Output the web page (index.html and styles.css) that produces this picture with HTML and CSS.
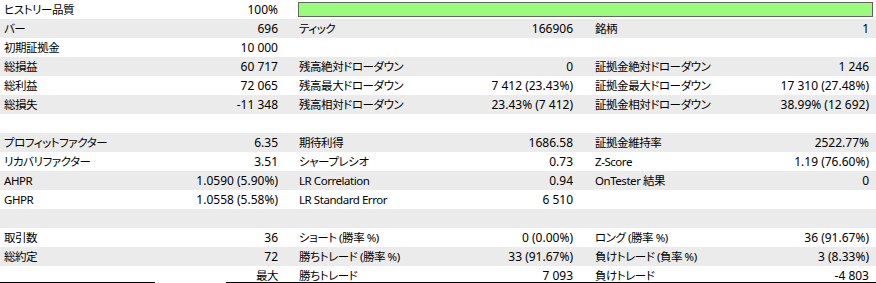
FILE: index.html
```html
<!DOCTYPE html>
<html lang="ja">
<head>
<meta charset="utf-8">
<link rel="stylesheet" href="styles.css">
</head>
<body>
<div class="report">
  <div class="row">
    <div class="cell"><span class="l">ヒストリー品質</span><span>100%</span></div>
    <div class="quality"><div class="bar"></div></div>
  </div>
  <div class="row alt">
    <div class="cell"><span class="l">バー</span><span>696</span></div>
    <div class="cell"><span class="l">ティック</span><span>166906</span></div>
    <div class="cell"><span class="l">銘柄</span><span>1</span></div>
  </div>
  <div class="row">
    <div class="cell"><span class="l">初期証拠金</span><span>10 000</span></div>
    <div class="cell"></div>
    <div class="cell"></div>
  </div>
  <div class="row alt">
    <div class="cell"><span class="l">総損益</span><span>60 717</span></div>
    <div class="cell"><span class="l">残高絶対ドローダウン</span><span>0</span></div>
    <div class="cell"><span class="l">証拠金絶対ドローダウン</span><span>1 246</span></div>
  </div>
  <div class="row">
    <div class="cell"><span class="l">総利益</span><span>72 065</span></div>
    <div class="cell"><span class="l">残高最大ドローダウン</span><span>7 412 (23.43%)</span></div>
    <div class="cell"><span class="l">証拠金最大ドローダウン</span><span>17 310 (27.48%)</span></div>
  </div>
  <div class="row alt">
    <div class="cell"><span class="l">総損失</span><span>-11 348</span></div>
    <div class="cell"><span class="l">残高相対ドローダウン</span><span>23.43% (7 412)</span></div>
    <div class="cell"><span class="l">証拠金相対ドローダウン</span><span>38.99% (12 692)</span></div>
  </div>
  <div class="row">
    <div class="cell"></div><div class="cell"></div><div class="cell"></div>
  </div>
  <div class="row alt">
    <div class="cell"><span class="l">プロフィットファクター</span><span>6.35</span></div>
    <div class="cell"><span class="l">期待利得</span><span>1686.58</span></div>
    <div class="cell"><span class="l">証拠金維持率</span><span>2522.77%</span></div>
  </div>
  <div class="row">
    <div class="cell"><span class="l">リカバリファクター</span><span>3.51</span></div>
    <div class="cell"><span class="l">シャープレシオ</span><span>0.73</span></div>
    <div class="cell"><span class="l">Z-Score</span><span>1.19 (76.60%)</span></div>
  </div>
  <div class="row alt">
    <div class="cell"><span class="l">AHPR</span><span>1.0590 (5.90%)</span></div>
    <div class="cell"><span class="l">LR Correlation</span><span>0.94</span></div>
    <div class="cell"><span class="l">OnTester 結果</span><span>0</span></div>
  </div>
  <div class="row">
    <div class="cell"><span class="l">GHPR</span><span>1.0558 (5.58%)</span></div>
    <div class="cell"><span class="l">LR Standard Error</span><span>6 510</span></div>
    <div class="cell"></div>
  </div>
  <div class="row alt">
    <div class="cell"></div><div class="cell"></div><div class="cell"></div>
  </div>
  <div class="row">
    <div class="cell"><span class="l">取引数</span><span>36</span></div>
    <div class="cell"><span class="l">ショート (勝率 %)</span><span>0 (0.00%)</span></div>
    <div class="cell"><span class="l">ロング (勝率 %)</span><span>36 (91.67%)</span></div>
  </div>
  <div class="row alt">
    <div class="cell"><span class="l">総約定</span><span>72</span></div>
    <div class="cell"><span class="l">勝ちトレード (勝率 %)</span><span>33 (91.67%)</span></div>
    <div class="cell"><span class="l">負けトレード (負率 %)</span><span>3 (8.33%)</span></div>
  </div>
  <div class="row last">
    <div class="cell"><span class="l"></span><span class="l">最大</span></div>
    <div class="cell"><span class="l">勝ちトレード</span><span>7 093</span></div>
    <div class="cell"><span class="l">負けトレード</span><span>-4 803</span></div>
  </div>
</div>
</body>
</html>
```
FILE: styles.css
```css
html, body {
  margin: 0;
  padding: 0;
  background: #ffffff;
  overflow: hidden;
}
.report {
  width: 876px;
  font-family: "Noto Sans", "Noto Sans CJK JP", sans-serif;
  font-size: 12px;
  font-feature-settings: "palt";
  color: #000;
}
.row {
  display: grid;
  grid-template-columns: 295px 295px 286px;
  height: 19px;
  line-height: 19px;
  background: #ffffff;
}
.row.alt {
  background: #ebebeb;
}
.row.last {
  background:
    linear-gradient(#000, #000) 0 16px / 155px 1px no-repeat,
    linear-gradient(#000, #000) 226px 16px / 650px 1px no-repeat,
    #ffffff;
}
.cell {
  display: flex;
  justify-content: space-between;
  padding: 0 17px 0 4px;
  white-space: nowrap;
}
.cell:nth-child(3) {
  padding: 0 7px 0 5px;
}
.l {
  font-size: 11.5px;
  letter-spacing: -0.45px;
}
.quality {
  grid-column: 2 / 4;
  padding: 2px 3px 2px 3px;
}
.bar {
  height: 13px;
  background: #9afc7f;
  border: 1px solid #646464;
}
```
